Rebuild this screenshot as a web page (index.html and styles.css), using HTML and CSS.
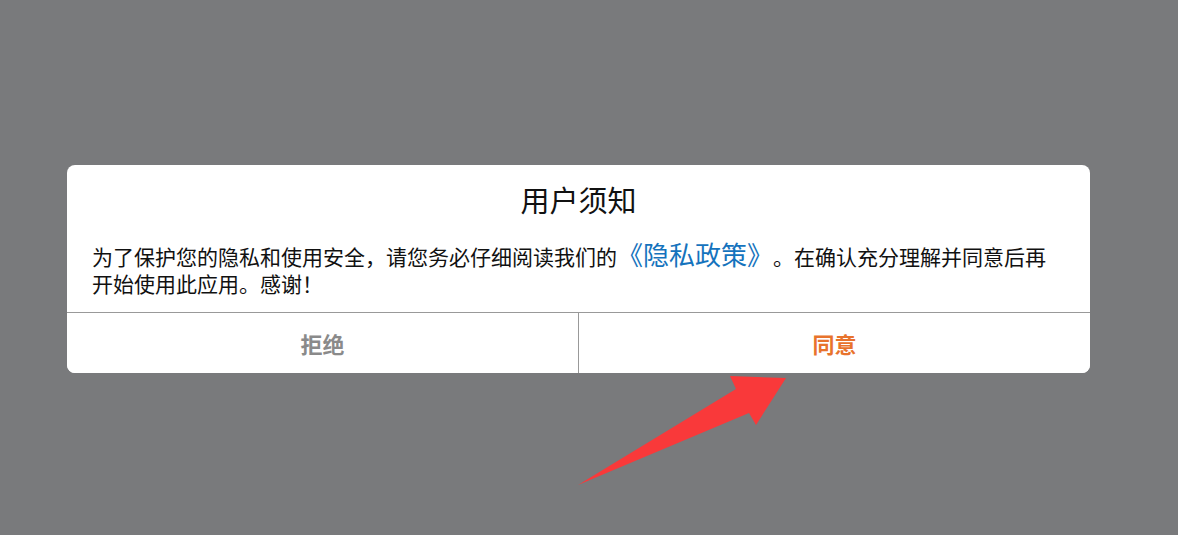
FILE: index.html
```html
<!DOCTYPE html>
<html lang="zh-CN">
<head>
    <meta charset="UTF-8">
    <title>用户须知</title>
    <link rel="stylesheet" href="styles.css">
</head>
<body>
    <div class="dialog">
        <h1 class="dialog-title">用户须知</h1>
        <p class="dialog-text">为了保护您的隐私和使用安全，请您务必仔细阅读我们的<a class="policy-link" href="#">《隐私政策》</a>。在确认充分理解并同意后再开始使用此应用。感谢！</p>
        <div class="dialog-actions">
            <button class="btn btn-refuse">拒绝</button>
            <button class="btn btn-agree">同意</button>
        </div>
    </div>

    <!-- red pointer arrow -->
    <svg class="pointer-arrow" width="1178" height="535" viewBox="0 0 1178 535">
        <polygon points="578,485 736,389 730,376 786,378 756,425 749,413" fill="#f9393a"/>
    </svg>
</body>
</html>
```

FILE: styles.css
```css
body {
    margin: 0;
    padding: 165px 0 0 67px;
    height: 535px;
    box-sizing: border-box;
    background-color: #797a7c;
    font-family: "Noto Sans CJK SC", "Noto Sans", sans-serif;
    overflow: hidden;
}
.dialog {
    width: 1023px;
    background: #fff;
    border-radius: 8px;
    overflow: hidden;
}
.dialog-title {
    margin: 0;
    padding-top: 13px;
    font-size: 29px;
    font-weight: normal;
    line-height: 42px;
    text-align: center;
    color: #111;
}
.dialog-text {
    margin: 0;
    padding: 23px 25px 15px 25px;
    font-size: 21px;
    line-height: 27px;
    color: #111;
    text-spacing-trim: space-all;
}
.policy-link {
    font-size: 26px;
    line-height: 20px;
    color: #1573bd;
    text-decoration: none;
}
.dialog-actions {
    display: flex;
    border-top: 1px solid #999;
}
.btn {
    flex: 1;
    height: 60px;
    border: none;
    background: #fff;
    font-family: inherit;
    font-size: 22px;
    font-weight: bold;
    cursor: pointer;
}
.btn-refuse {
    color: #8a8a8a;
    border-right: 1px solid #999;
}
.btn-agree {
    color: #e8732c;
}
.pointer-arrow {
    position: absolute;
    left: 0;
    top: 0;
    pointer-events: none;
}
```
